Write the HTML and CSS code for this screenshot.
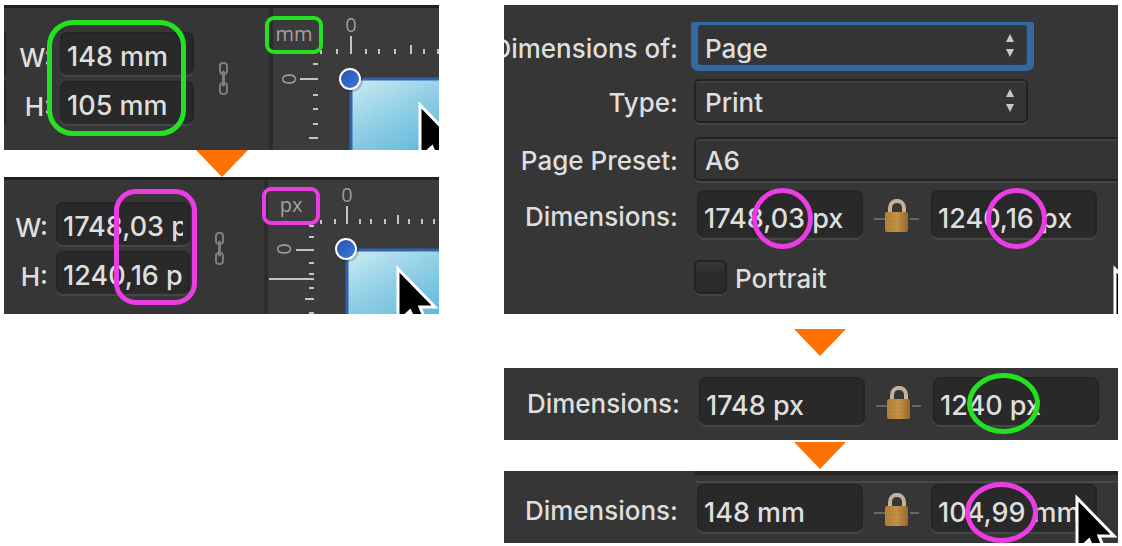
FILE: index.html
```
<!DOCTYPE html>
<html lang="en">
<head>
    <meta charset="UTF-8">
    <meta name="viewport" content="width=device-width, initial-scale=1.0">
    <title>Dimensions: mm and px</title>
    <link rel="stylesheet" href="styles.css">
</head>
<body>
    <!-- shared shapes -->
    <svg class="defs" aria-hidden="true">
        <defs>
            <linearGradient id="sky" x1="0" y1="0" x2="0.6" y2="1">
                <stop offset="0" stop-color="#cdebf4"/>
                <stop offset="0.45" stop-color="#93d0e6"/>
                <stop offset="1" stop-color="#58b5da"/>
            </linearGradient>
            <linearGradient id="knob" x1="0" y1="0" x2="1" y2="1">
                <stop offset="0" stop-color="#2352b4"/>
                <stop offset="1" stop-color="#3d78d8"/>
            </linearGradient>
            <linearGradient id="brass" x1="0" y1="0" x2="1" y2="0">
                <stop offset="0" stop-color="#b07d33"/>
                <stop offset="0.5" stop-color="#c4924a"/>
                <stop offset="1" stop-color="#966928"/>
            </linearGradient>
            <symbol id="arrow" viewBox="0 0 52 27">
                <path d="M0 0H52L26 27Z" fill="#ff7100"/>
            </symbol>
            <symbol id="cursor" viewBox="0 0 44 66">
                <path d="M2 4V57L14 46L22 63L31 59L24 42H39Z" fill="#000" stroke="#fff" stroke-width="3"/>
            </symbol>
            <symbol id="link" viewBox="0 0 11 33">
                <g fill="none" stroke="#7d7d7d" stroke-width="2">
                    <rect x="2" y="1" width="7" height="11" rx="3"/>
                    <rect x="2" y="21" width="7" height="11" rx="3"/>
                </g>
                <path d="M5.500 10V23" stroke="#7d7d7d" stroke-width="3" stroke-linecap="round"/>
            </symbol>
            <symbol id="lock" viewBox="0 0 46 34">
                <path d="M0 20H11M36 20H45" stroke="#777" stroke-width="1.500"/>
                <path d="M16 14V9C16 -0.500 30 -0.500 30 9V14" fill="none" stroke="#c3b298" stroke-width="4"/>
                <rect x="11" y="13" width="23" height="20" rx="2" fill="url(#brass)"/>
                <path d="M12 18H33M12 22H33M12 26H33M12 30H33" stroke="#a87730" opacity="0.3"/>
            </symbol>
        </defs>
    </svg>

    <main class="page">
        <div class="column">
            <section class="panel studio studio-mm">
                <div class="transform">
                    <label for="w-mm">W:</label>
                    <input id="w-mm" class="field" type="text" value="148 mm">
                    <label for="h-mm">H:</label>
                    <input id="h-mm" class="field" type="text" value="105 mm">
                    <svg class="link"><use href="#link"/></svg>
                    <span class="mark mark-both"></span>
                </div>
                <div class="ruler">
                    <svg class="canvas" viewBox="273 5 166 145" preserveAspectRatio="xMinYMin slice">
                        <rect x="351" y="79" width="400" height="300" fill="#8ccde5"/>
                        <rect x="351" y="79" width="100" height="90" fill="url(#sky)"/>
                        <path d="M351 151V79H800" fill="none" stroke="#3562ac" stroke-width="3"/>
                        <path class="ticks" d="M351 36V54M321 50V54M337 49V54M366 49V54M379 49V54M395 49V54M411 45V54M424 49V54M438 49V54"/>
                        <path class="ticks" d="M300 79H318M313 64H318M313 95H318M313 109H318M313 124H318M309 138H318"/>
                        <text class="zero" x="351" y="32">0</text>
                        <text class="zero" transform="translate(296 79) rotate(-90)">0</text>
                        <circle cx="351" cy="80" r="12" fill="#000" opacity="0.2"/>
                        <circle cx="350" cy="79" r="11" fill="#fff"/>
                        <circle cx="350" cy="79" r="9" fill="url(#knob)"/>
                        <use href="#cursor" x="418" y="101" width="44" height="66"/>
                    </svg>
                    <span class="unit unit-ok">mm</span>
                </div>
            </section>

            <div class="step"><svg class="arrow"><use href="#arrow"/></svg></div>

            <section class="panel studio studio-px">
                <div class="transform">
                    <label for="w-px">W:</label>
                    <input id="w-px" class="field" type="text" value="1748,03 px">
                    <label for="h-px">H:</label>
                    <input id="h-px" class="field" type="text" value="1240,16 px">
                    <svg class="link"><use href="#link"/></svg>
                    <span class="mark mark-decimals"></span>
                </div>
                <div class="ruler">
                    <svg class="canvas" viewBox="268 177 171 137" preserveAspectRatio="xMinYMin slice">
                        <rect x="347" y="250" width="400" height="300" fill="#8ccde5"/>
                        <rect x="347" y="250" width="100" height="90" fill="url(#sky)"/>
                        <path d="M347 320V250H800" fill="none" stroke="#3562ac" stroke-width="3"/>
                        <path class="ticks" d="M347 206V224M321 220V224M335 219V224M360 219V224M371 219V224M385 219V224M398 215V224M409 219V224M422 219V224M434 219V224"/>
                        <path class="ticks" d="M296 250H314M309 226H314M309 237H314M309 263H314M309 274H314M269 279H314M309 288H314M305 299H314M309 313H314"/>
                        <text class="zero" x="347" y="202">0</text>
                        <text class="zero" transform="translate(291 249) rotate(-90)">0</text>
                        <circle cx="347" cy="250" r="12" fill="#000" opacity="0.2"/>
                        <circle cx="346" cy="249" r="11" fill="#fff"/>
                        <circle cx="346" cy="249" r="9" fill="url(#knob)"/>
                        <use href="#cursor" x="396" y="265" width="44" height="66"/>
                    </svg>
                    <span class="unit unit-bad">px</span>
                </div>
            </section>
        </div>

        <div class="column">
            <section class="panel setup">
                <div class="row">
                    <label for="target">Dimensions of:</label>
                    <div class="picker focused">
                        <select id="target"><option>Page</option></select>
                        <svg viewBox="0 0 10 24"><path d="M5 0L9 8H1ZM1 15H9L5 23Z"/></svg>
                    </div>
                </div>
                <div class="row">
                    <label for="type">Type:</label>
                    <div class="picker">
                        <select id="type"><option>Print</option></select>
                        <svg viewBox="0 0 10 24"><path d="M5 0L9 8H1ZM1 15H9L5 23Z"/></svg>
                    </div>
                </div>
                <div class="row row-preset">
                    <label for="preset">Page Preset:</label>
                    <div class="picker wide">
                        <select id="preset"><option>A6</option></select>
                    </div>
                </div>
                <div class="row row-size">
                    <label for="size-w">Dimensions:</label>
                    <div class="size">
                        <input id="size-w" class="field" type="text" value="1748,03 px">
                        <span class="ring"></span>
                    </div>
                    <svg class="lock"><use href="#lock"/></svg>
                    <div class="size">
                        <input class="field" type="text" value="1240,16 px" aria-label="Height">
                        <span class="ring"></span>
                    </div>
                </div>
                <div class="row row-check">
                    <input id="portrait" type="checkbox">
                    <label for="portrait">Portrait</label>
                </div>
                <svg class="cursor cursor-edge"><use href="#cursor"/></svg>
            </section>

            <div class="step step-tall"><svg class="arrow"><use href="#arrow"/></svg></div>

            <section class="panel strip strip-px">
                <div class="row row-size">
                    <label for="round-w">Dimensions:</label>
                    <div class="size">
                        <input id="round-w" class="field" type="text" value="1748 px">
                    </div>
                    <svg class="lock"><use href="#lock"/></svg>
                    <div class="size">
                        <input class="field" type="text" value="1240 px" aria-label="Height">
                        <span class="ring ring-wide ring-ok"></span>
                    </div>
                </div>
            </section>

            <div class="step step-short"><svg class="arrow"><use href="#arrow"/></svg></div>

            <section class="panel strip strip-mm">
                <div class="row row-size">
                    <label for="back-w">Dimensions:</label>
                    <div class="size">
                        <input id="back-w" class="field" type="text" value="148 mm">
                    </div>
                    <svg class="lock"><use href="#lock"/></svg>
                    <div class="size">
                        <input class="field" type="text" value="104,99 mm" aria-label="Height">
                        <span class="ring ring-wide"></span>
                    </div>
                </div>
                <svg class="cursor"><use href="#cursor"/></svg>
            </section>
        </div>
    </main>
</body>
</html>
```
FILE: styles.css
```
* {
    box-sizing: border-box;
}
body {
    --ok: #22e222;
    --bad: #ea3de3;
    margin: 0;
    background: #fff;
    color: #dedede;
    font-family: Inter, "Liberation Sans", sans-serif;
    font-size: 26px;
    font-weight: 500;
    line-height: 32px;
}
input, select {
    font: inherit;
    color: inherit;
    margin: 0;
}
.defs {
    position: absolute;
    width: 0;
    height: 0;
}
.page {
    display: grid;
    grid-template-columns: 435fr 614fr;
    gap: 65px;
    align-items: start;
    padding: 5px 4px 0;
}
.column {
    min-width: 0;
}
.panel {
    position: relative;
    overflow: hidden;
    background: #363636;
}
.field {
    display: block;
    width: 100%;
    background: #292929;
    border: 2px solid #242424;
    border-bottom-color: #2b2b2b;
    border-radius: 7px;
    box-shadow: 0 2px 0 #464646;
    outline: none;
    font-size: 27px;
}

/* arrows between panels */
.step {
    display: flex;
    justify-content: center;
    height: 27px;
}
.step-tall {
    height: 54px;
    padding: 15px 0 0 18px;
}
.step-short {
    height: 31px;
    padding: 2px 0 0 18px;
}
.arrow {
    flex: none;
    width: 52px;
    height: 27px;
}

/* transform panel and rulers */
.studio {
    display: flex;
    border-top: 3px solid #202020;
}
.transform {
    position: relative;
    display: grid;
    grid-template-columns: 48px 134px 11px;
    grid-template-rows: 43px 43px;
    row-gap: 6px;
    flex: none;
    width: 269px;
    padding: 24px 0 26px;
    border-right: 4px solid #2c2c2c;
}
.studio-px .transform {
    grid-template-columns: 44px 134px 11px;
    width: 264px;
    padding: 22px 0 20px;
}
.transform label {
    padding-top: 10px;
    text-align: right;
}
.transform .field {
    margin-left: 8px;
    padding: 7px 5px 0;
}
.link {
    grid-column: 3;
    grid-row: 1 / 3;
    align-self: center;
    width: 11px;
    height: 33px;
    margin-left: 32px;
}
/* fields cut off by the left edge */
.studio-mm .transform::before {
    content: "";
    position: absolute;
    left: 0;
    top: 24px;
    width: 2px;
    height: 92px;
    background: linear-gradient(#262626 43px, #363636 43px 49px, #262626 49px);
}
.mark {
    position: absolute;
    top: 12px;
    height: 116px;
    border: 5px solid var(--ok);
    border-radius: 26px;
}
.mark-both {
    left: 43px;
    width: 139px;
}
.mark-decimals {
    top: 9px;
    left: 110px;
    width: 83px;
    border-color: var(--bad);
    border-radius: 22px;
}
.ruler {
    position: relative;
    flex: 1;
    min-width: 0;
    margin-top: -3px;
    background: #3b3b3b;
    border-top: 3px solid #202020;
}
.canvas {
    position: absolute;
    top: -3px;
    left: 0;
    width: 100%;
    height: calc(100% + 3px);
}
.ticks {
    stroke: #c4c4c4;
    stroke-width: 2px;
}
.zero {
    fill: #9a9a9a;
    font-size: 20px;
    font-family: "Open Sans", sans-serif;
    font-weight: 400;
    text-anchor: middle;
}
.unit {
    position: absolute;
    top: 8px;
    left: -8px;
    width: 58px;
    height: 38px;
    border: 4px solid var(--ok);
    border-radius: 9px;
    color: #a2a2a2;
    font-family: "Open Sans", sans-serif;
    font-size: 20px;
    font-weight: 400;
    line-height: 27px;
    text-align: center;
}
.unit-bad {
    top: 7px;
    left: -6px;
    border-color: var(--bad);
}

/* document setup */
.setup {
    padding: 17px 0 20px;
}
.row {
    display: flex;
    align-items: center;
    height: 44px;
    margin-bottom: 14px;
}
.row > label:first-child {
    flex: none;
    display: flex;
    justify-content: flex-end;
    width: 174px;
    margin-right: 16px;
    padding-top: 4px;
    white-space: nowrap;
}
.row:first-child {
    height: 49px;
    margin-bottom: 8px;
}
.picker {
    position: relative;
    width: 334px;
    height: 44px;
}
.picker select {
    appearance: none;
    width: 100%;
    height: 100%;
    padding: 4px 9px 0;
    background: #343434;
    border: 2px solid #222;
    border-radius: 5px;
    box-shadow: 0 2px 0 #454545, inset 0 2px 0 #404040;
    outline: none;
}
.picker svg {
    position: absolute;
    top: 10px;
    right: 13px;
    width: 10px;
    height: 24px;
    fill: #c8c8c8;
}
.focused {
    width: 343px;
    height: 49px;
    margin-left: -3px;
    background: #34699f;
    border-radius: 2px 2px 7px 7px;
    padding: 3px 7px 6px;
}
.focused select {
    padding: 6px 5px 0;
    border-color: #2b3a4a;
    border-radius: 3px;
    box-shadow: none;
}
.focused svg {
    top: 12px;
    right: 19px;
}
.wide {
    flex: 1;
}
.wide select {
    width: calc(100% + 10px);
}
.row-preset {
    margin-bottom: 9px;
}
.row-size {
    height: 48px;
    margin-bottom: 22px;
}
.row-size > label:first-child {
    margin-right: 19px;
    padding-top: 6px;
}
.size {
    position: relative;
    width: 166px;
}
.size .field {
    height: 48px;
    padding: 8px 5px 0;
}
.lock {
    width: 46px;
    height: 34px;
    margin: 3px 11px 0;
}
.ring {
    position: absolute;
    top: -2px;
    left: 55px;
    width: 61px;
    height: 61px;
    border: 5px solid var(--bad);
    border-radius: 50%;
}
.ring-wide {
    left: 34px;
    width: 73px;
}
.ring-ok {
    top: -4px;
    border-color: var(--ok);
}
.row-check {
    height: 34px;
    margin: 0 0 0 190px;
}
.row-check input {
    appearance: none;
    width: 33px;
    height: 34px;
    margin-right: 8px;
    background: linear-gradient(#383838, #2b2b2b 40%);
    border: 2px solid #222;
    border-radius: 6px;
    box-shadow: 0 2px 0 #444;
}
.row-check label {
    padding-top: 3px;
}
.strip {
    height: 72px;
}
.strip .row {
    height: 48px;
    margin: 0;
}
.strip-px {
    padding: 9px 0 0 2px;
}
.strip-mm {
    padding-top: 13px;
}
/* lower edge of the preset list above the row */
.strip-mm::before {
    content: "";
    position: absolute;
    top: 0;
    left: 191px;
    right: 0;
    height: 6px;
    background: #363636;
    border-top: 4px solid #242424;
    border-bottom: 2px solid #484848;
}
.cursor {
    position: absolute;
    top: 23px;
    right: -1px;
    width: 44px;
    height: 66px;
}
.cursor-edge {
    top: 260px;
    right: -39px;
}
```
